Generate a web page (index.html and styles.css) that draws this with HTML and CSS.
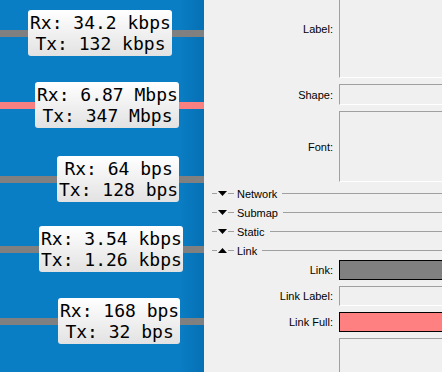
FILE: index.html
```html
<!DOCTYPE html>
<html lang="en">
<head>
    <meta charset="UTF-8">
    <title>Map Properties</title>
    <link rel="stylesheet" href="styles.css">
</head>
<body>
    <div class="map">
        <div class="link grey" style="top: 30px;"></div>
        <div class="link pink" style="top: 102px;"></div>
        <div class="link grey" style="top: 176px;"></div>
        <div class="link grey" style="top: 246px;"></div>
        <div class="link grey" style="top: 318px;"></div>

        <div class="rate" style="left: 28px; top: 10px;"><div>Rx: 34.2 kbps</div><div>Tx: 132 kbps</div></div>
        <div class="rate" style="left: 35px; top: 82px;"><div>Rx: 6.87 Mbps</div><div>Tx: 347 Mbps</div></div>
        <div class="rate" style="left: 57px; top: 156px;"><div>Rx: 64 bps</div><div>Tx: 128 bps</div></div>
        <div class="rate" style="left: 39px; top: 226px;"><div>Rx: 3.54 kbps</div><div>Tx: 1.26 kbps</div></div>
        <div class="rate" style="left: 58px; top: 298px;"><div>Rx: 168 bps</div><div>Tx: 32 bps</div></div>
    </div>

    <div class="props">
        <div class="form top-form">
            <span class="lbl">Label:</span><div class="field h-label"></div>
            <span class="lbl">Shape:</span><div class="field h-shape"></div>
            <span class="lbl">Font:</span><div class="field h-font"></div>
        </div>

        <div class="group">
            <div class="dash"></div>
            <svg class="arrow" width="9" height="5" viewBox="0 0 9 5"><polygon points="0,0 9,0 4.5,5" fill="#000"/></svg>
            <div class="dash wide"></div>
            <span>Network</span>
            <div class="rule"></div>
        </div>
        <div class="group">
            <div class="dash"></div>
            <svg class="arrow" width="9" height="5" viewBox="0 0 9 5"><polygon points="0,0 9,0 4.5,5" fill="#000"/></svg>
            <div class="dash wide"></div>
            <span>Submap</span>
            <div class="rule"></div>
        </div>
        <div class="group">
            <div class="dash"></div>
            <svg class="arrow" width="9" height="5" viewBox="0 0 9 5"><polygon points="0,0 9,0 4.5,5" fill="#000"/></svg>
            <div class="dash wide"></div>
            <span>Static</span>
            <div class="rule"></div>
        </div>
        <div class="group">
            <div class="dash"></div>
            <svg class="arrow" width="9" height="5" viewBox="0 0 9 5"><polygon points="0,5 9,5 4.5,0" fill="#000"/></svg>
            <div class="dash wide"></div>
            <span>Link</span>
            <div class="rule"></div>
        </div>

        <div class="form">
            <span class="lbl">Link:</span><div class="field swatch" style="background: #808080;"></div>
            <span class="lbl">Link Label:</span><div class="field h-row"></div>
            <span class="lbl">Link Full:</span><div class="field swatch" style="background: #ff8080;"></div>
            <span class="lbl"></span><div class="field h-last"></div>
        </div>
    </div>
</body>
</html>
```

FILE: styles.css
```css
body {
    margin: 0;
    padding: 0;
    width: 442px;
    height: 372px;
    overflow: hidden;
    display: flex;
    background-color: #f0f0f0;
    font-family: "Liberation Sans", Arial, sans-serif;
    font-size: 11px;
    color: #000;
}
.map {
    position: relative;
    width: 204px;
    height: 372px;
    flex-shrink: 0;
    overflow: hidden;
    background: linear-gradient(to right, #0a7ec5 0, #0a7ec5 178px, #0670b4 204px);
}
.link {
    position: absolute;
    left: 0;
    width: 204px;
    height: 7px;
}
.grey {
    background-color: #808080;
}
.pink {
    background-color: #f88080;
}
.rate {
    position: absolute;
    padding: 2px 1px 2px 2px;
    font-family: "DejaVu Sans Mono", monospace;
    font-size: 18px;
    line-height: 21px;
    text-align: center;
    white-space: pre;
    color: #000;
    background: linear-gradient(#ffffff, #e2e2e2);
    border-radius: 3px;
}
.props {
    flex: 1;
    overflow: hidden;
}
.form {
    display: grid;
    grid-template-columns: 129px 120px;
    column-gap: 6px;
    row-gap: 6px;
    align-items: center;
}
.top-form {
    margin-top: -21px;
}
.lbl {
    text-align: right;
}
.field {
    box-sizing: border-box;
    border-top: 1px solid #a0a0a0;
    border-left: 1px solid #a0a0a0;
    border-bottom: 1px solid #ffffff;
    border-right: 1px solid #ffffff;
}
.h-label {
    height: 99px;
}
.h-shape {
    height: 21px;
}
.h-font {
    height: 71px;
}
.h-row {
    height: 20px;
}
.h-last {
    height: 40px;
}
.swatch {
    height: 20px;
    border: 1px solid #000;
}
.group {
    display: flex;
    align-items: center;
    height: 19px;
    padding-left: 8px;
}
.group:first-of-type {
    margin-top: 2px;
}
.top-form + .group {
    margin-top: 2px;
}
.dash {
    width: 5px;
    height: 1px;
    background-color: #a0a0a0;
}
.dash.wide {
    width: 6px;
    margin-right: 3px;
}
.arrow {
    margin: 0 1px;
}
.rule {
    flex: 1;
    height: 1px;
    margin-left: 5px;
    background-color: #a0a0a0;
}
```
